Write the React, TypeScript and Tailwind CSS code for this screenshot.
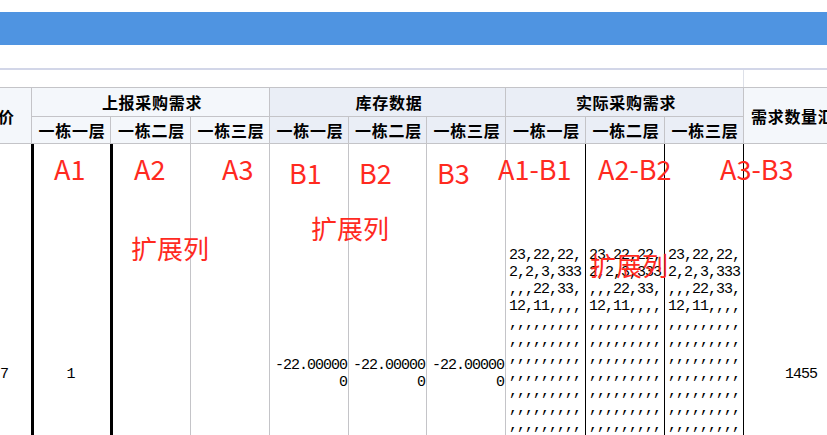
const floors = ["一栋一层", "一栋二层", "一栋三层"];
const sans = "font-['Noto_Sans_CJK_SC','Noto_Sans',sans-serif]";
const mono = "font-['Liberation_Mono','Noto_Sans_CJK_SC',monospace]";

const headLight = "bg-[#f4f7fb]";
const headDark = "bg-[#eaeef6]";
const line = "border-[#c4c4c8]";

function GroupHead({ title, tone }: { title: string; tone: string }) {
  return (
    <div className={`col-span-3 flex items-center justify-center border-l border-b ${line} ${tone} pb-px pl-[3px] text-[16px] font-bold tracking-[0.7px] text-black`}>
      {title}
    </div>
  );
}

function FloorHead({ tone }: { tone: string }) {
  return (
    <>
      {floors.map((f) => (
        <div key={f} className={`flex items-center justify-center border-l ${line} ${tone} pl-[2px] text-[16px] font-bold tracking-[0.7px] text-black`}>
          {f}
        </div>
      ))}
    </>
  );
}

const commas = ",,,,,,,,,";
const listLines = ["23,22,22,", "2,2,3,333", ",,,22,33,", "12,11,,,,", ...Array(11).fill(commas)];

function ListCell({ edge }: { edge: string }) {
  return (
    <div className={`flex flex-col justify-center border-l ${edge} pl-[3px] pt-[2px]`}>
      {listLines.map((l, i) => (
        <div key={i} className="h-[17px] whitespace-pre leading-[17px]">{l}</div>
      ))}
    </div>
  );
}

function StockCell() {
  return (
    <div className={`flex flex-col items-end justify-center border-l ${line} pr-px pt-[2px] leading-[17px]`}>
      <div>-22.00000</div>
      <div>0</div>
    </div>
  );
}

export default function App() {
  return (
    <div className={`relative h-[435px] w-[827px] overflow-hidden bg-white ${sans}`}>
      <div className="mt-[12px] h-[33px] bg-[#4f94e1]" />
      <div className="h-[23px]" />
      <div className="h-[2px] bg-[#d2d6e8]" />
      <div className="ml-[743px] h-[17px] border-l border-[#dde0e8]" />

      <div className={`-ml-[35px] grid w-[976px] grid-cols-[66px_79px_80px_79px_79px_78px_79px_80px_79px_79px_198px] grid-rows-[29px_27px_458px] border-t ${line}`}>
        <div className={`row-span-2 flex items-center justify-center border-b ${line} ${headLight} text-[16px] font-bold tracking-[0.7px] text-black`}>
          单价
        </div>
        <GroupHead title="上报采购需求" tone={headLight} />
        <GroupHead title="库存数据" tone={headDark} />
        <GroupHead title="实际采购需求" tone={headDark} />
        <div className={`row-span-2 flex items-center border-l border-b ${line} ${headLight} pl-[7px] text-[16px] font-bold tracking-[0.7px] text-black`}>
          需求数量汇总
        </div>

        <div className={`col-span-3 grid grid-cols-subgrid border-b ${line}`}><FloorHead tone={headLight} /></div>
        <div className={`col-span-3 grid grid-cols-subgrid border-b ${line}`}><FloorHead tone={headDark} /></div>
        <div className={`col-span-3 grid grid-cols-subgrid border-b ${line}`}><FloorHead tone={headDark} /></div>

        <div className={`contents text-[15px] tracking-[-1px] text-black ${mono}`}>
          <div className="flex items-center justify-end pr-[23px] pt-[4px]">7</div>
          <div className="flex items-center justify-center border-l-[3px] border-black pr-[3px] pt-[4px]">1</div>
          <div className="border-l-[3px] border-black" />
          <div className={`border-l ${line}`} />
          <StockCell />
          <StockCell />
          <StockCell />
          <ListCell edge={line} />
          <ListCell edge="border-black" />
          <ListCell edge="border-black" />
          <div className="flex items-center border-l border-black pl-[41px] pt-[4px]">1455</div>
        </div>
      </div>

      <div className="pointer-events-none text-[27px] leading-none text-[#ff2a1f]">
        <span className="absolute left-[54px] top-[155px]">A1</span>
        <span className="absolute left-[134px] top-[155px]">A2</span>
        <span className="absolute left-[222px] top-[155px]">A3</span>
        <span className="absolute left-[289px] top-[159px]">B1</span>
        <span className="absolute left-[359px] top-[159px]">B2</span>
        <span className="absolute left-[437px] top-[159px]">B3</span>
        <span className="absolute left-[498px] top-[155px]">A1-B1</span>
        <span className="absolute left-[598px] top-[155px]">A2-B2</span>
        <span className="absolute left-[720px] top-[155px]">A3-B3</span>
        <span className="absolute left-[131px] top-[235px] text-[26px]">扩展列</span>
        <span className="absolute left-[311px] top-[215px] text-[26px]">扩展列</span>
        <span className="absolute left-[590px] top-[252px] text-[26px]">扩展列</span>
      </div>
    </div>
  );
}
